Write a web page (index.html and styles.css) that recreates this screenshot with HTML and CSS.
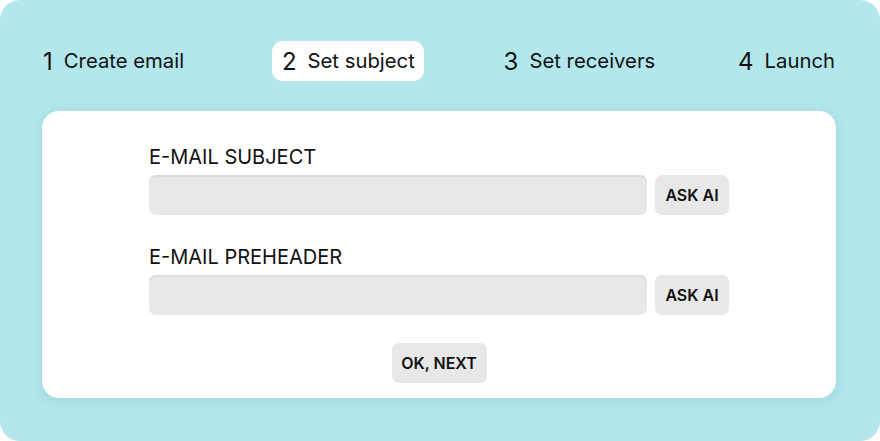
FILE: index.html
```html
<!DOCTYPE html>
<html lang="en">
<head>
<meta charset="utf-8">
<title>Set subject</title>
<link rel="stylesheet" href="styles.css">
</head>
<body>
<div class="frame">
  <nav class="steps">
    <div class="step"><span class="num">1</span><span class="name">Create email</span></div>
    <div class="step active"><span class="num">2</span><span class="name">Set subject</span></div>
    <div class="step third"><span class="num">3</span><span class="name">Set receivers</span></div>
    <div class="step"><span class="num">4</span><span class="name">Launch</span></div>
  </nav>
  <section class="card">
    <div class="form">
      <div class="field">
        <label class="label">E-MAIL SUBJECT</label>
        <div class="row">
          <input class="input" type="text">
          <button class="btn">ASK AI</button>
        </div>
      </div>
      <div class="field">
        <label class="label">E-MAIL PREHEADER</label>
        <div class="row">
          <input class="input" type="text">
          <button class="btn">ASK AI</button>
        </div>
      </div>
      <div class="actions">
        <button class="btn next">OK, NEXT</button>
      </div>
    </div>
  </section>
</div>
</body>
</html>
```

FILE: styles.css
```css
* { box-sizing: border-box; }
html, body { margin: 0; padding: 0; background: #ffffff; }
body { font-family: Inter, "Noto Sans", "Liberation Sans", sans-serif; color: #111; }

.frame {
  width: 880px;
  height: 441px;
  background: #b3e7ec;
  border-radius: 20px;
  padding: 41px 36px 0 33px;
}

.steps {
  display: flex;
  justify-content: space-between;
  align-items: center;
  height: 40px;
}
.step {
  display: flex;
  align-items: center;
  gap: 11px;
  height: 40px;
  padding: 1px 9px 0 10px;
  border-radius: 11px;
}
.step.active { background: #ffffff; margin-left: 9px; }
.step.third { margin-right: -6px; }
.num {
  font-size: 24px;
  font-weight: 400;
  line-height: 1;
  color: #111;
}
.name {
  font-size: 20.3px;
  font-weight: 400;
  line-height: 1;
  color: #111;
}

.card {
  margin: 30px 8px 0 9px;
  height: 287px;
  background: #ffffff;
  border-radius: 17px;
  box-shadow: 0 2px 14px rgba(60, 140, 150, 0.18);
  padding: 34px 0 0;
  display: flex;
  justify-content: center;
}
.form {
  width: 580px;
  display: flex;
  flex-direction: column;
  gap: 30px;
}
.field {
  display: flex;
  flex-direction: column;
  gap: 6px;
}
.label {
  font-size: 20px;
  line-height: 24px;
  font-weight: 400;
  color: #111;
}
.row {
  display: flex;
  gap: 8px;
}
.input {
  flex: 1;
  height: 40px;
  border: none;
  border-radius: 7px;
  background: #e8e8e8;
  box-shadow: inset 0 2px 0 #dcdcdc;
  outline: none;
}
.btn {
  height: 40px;
  border: none;
  border-radius: 7px;
  background: #e8e8e8;
  font-family: Inter, "Noto Sans", "Liberation Sans", sans-serif;
  font-size: 16px;
  font-weight: 600;
  color: #111;
  padding: 0;
  width: 74px;
}
.actions {
  display: flex;
  justify-content: center;
  margin-top: -2px;
}
.btn.next { width: 95px; }
```
